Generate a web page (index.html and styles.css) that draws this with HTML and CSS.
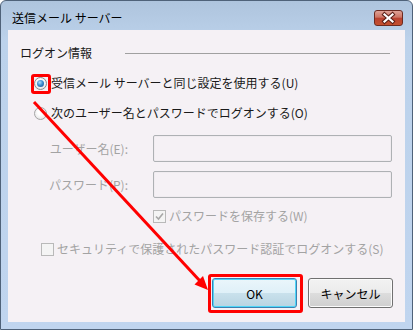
FILE: index.html
```html
<!DOCTYPE html>
<html lang="ja">
<head>
    <meta charset="UTF-8">
    <title>送信メール サーバー</title>
    <link rel="stylesheet" href="styles.css">
</head>
<body>
    <div class="window">
        <div class="titlebar">
            <span class="title">送信メール サーバー</span>
            <span class="close">
                <svg width="29" height="16" viewBox="0 0 29 16">
                    <path d="M10.5 4.5 L18.5 11.5 M18.5 4.5 L10.5 11.5" stroke="#5a1f16" stroke-width="4.2" stroke-linecap="square"/>
                    <path d="M10.5 4.5 L18.5 11.5 M18.5 4.5 L10.5 11.5" stroke="#ffffff" stroke-width="2.2" stroke-linecap="square"/>
                </svg>
            </span>
        </div>

        <div class="content">
            <div class="group-head">
                <span>ログオン情報</span>
                <span class="rule"></span>
            </div>

            <div class="option first">
                <span class="radio checked"><span class="dot"></span></span>
                <span>受信メール サーバーと同じ設定を使用する(U)</span>
            </div>
            <div class="option">
                <span class="radio"></span>
                <span>次のユーザー名とパスワードでログオンする(O)</span>
            </div>

            <div class="field first">
                <span class="field-label">ユーザー名(E):</span>
                <span class="input"></span>
            </div>
            <div class="field">
                <span class="field-label">パスワード(P):</span>
                <span class="input"></span>
            </div>

            <div class="check save">
                <span class="box">
                    <svg width="11" height="11" viewBox="0 0 11 11">
                        <path d="M2 5.5 L4.5 8 L9 2.5" fill="none" stroke="#a7a7a7" stroke-width="1.6"/>
                    </svg>
                </span>
                <span>パスワードを保存する(W)</span>
            </div>
            <div class="check secure">
                <span class="box"></span>
                <span>セキュリティで保護されたパスワード認証でログオンする(S)</span>
            </div>

            <div class="buttons">
                <span class="btn default">OK</span>
                <span class="btn">キャンセル</span>
            </div>
        </div>

        <!-- annotations drawn over the dialog -->
        <div class="mark mark-radio"></div>
        <div class="mark mark-ok"></div>
        <svg class="arrow" width="413" height="330" viewBox="0 0 413 330">
            <line x1="34" y1="102" x2="200" y2="281" stroke="#ff0000" stroke-width="3"/>
            <polygon points="208,290 194.5,284.5 203,276" fill="#ff0000"/>
        </svg>
    </div>
</body>
</html>
```

FILE: styles.css
```css
body {
    margin: 0;
    font-family: "Noto Sans CJK JP", "Noto Sans", sans-serif;
    font-size: 12px;
    color: #1a1a1a;
}
.window {
    position: relative;
    width: 413px;
    height: 330px;
    box-sizing: border-box;
    border: 1px solid #4f6279;
    border-radius: 6px 6px 0 0;
    background: linear-gradient(#aec4dd, #bcd2eb 40px, #c0d5ef);
    display: flex;
    flex-direction: column;
}
.titlebar {
    height: 29px;
    display: flex;
    align-items: flex-start;
    padding: 0 9px 0 11px;
}
.title {
    margin-top: 8px;
    line-height: 17px;
    color: #000;
}
.close {
    margin-left: auto;
    margin-top: 9px;
    width: 29px;
    height: 16px;
    box-sizing: border-box;
    border: 1px solid #6c2a20;
    border-radius: 3px;
    background: linear-gradient(#dfa397, #cc7363 45%, #b94130 50%, #c4502f 100%);
    display: flex;
    align-items: center;
    justify-content: center;
}
.close svg {
    margin: -1px;
}
.content {
    flex: 1;
    margin: 0 7px 7px 7px;
    background-color: #f5f1f5;
    padding: 15px 12px 0 12px;
}
.group-head {
    height: 16px;
    line-height: 16px;
    display: flex;
    align-items: center;
}
.rule {
    flex: 1;
    margin: 0 3px 0 33px;
    border-top: 1px solid #a0a0a0;
}
.option {
    height: 20px;
    line-height: 20px;
    display: flex;
    align-items: center;
    margin: 10px 0 0 14px;
}
.option.first {
    margin-top: 12px;
}
.radio {
    width: 13px;
    height: 13px;
    box-sizing: border-box;
    border-radius: 50%;
    border: 1px solid #a4a4a4;
    background: radial-gradient(circle at 50% 40%, #ffffff 30%, #dcdcdc 100%);
    margin-right: 4px;
    display: flex;
    align-items: center;
    justify-content: center;
}
.radio.checked {
    border-color: #8a8a8a;
}
.dot {
    width: 7px;
    height: 7px;
    border-radius: 50%;
    background: radial-gradient(circle at 40% 35%, #aee0fb 0%, #3d8fd0 45%, #174a84 100%);
}
.field {
    height: 27px;
    display: flex;
    align-items: center;
    margin: 9px 0 0 16px;
    color: #a3a3a3;
}
.field.first {
    margin-top: 12px;
}
.field-label {
    width: 92px;
    text-align: right;
    margin-right: 25px;
}
.input {
    width: 239px;
    height: 27px;
    box-sizing: border-box;
    border: 1px solid #aeb1b4;
    border-radius: 2px;
    box-shadow: inset 0 0 0 1px #f0ecf0;
}
.check {
    height: 14px;
    line-height: 14px;
    display: flex;
    align-items: center;
    color: #a3a3a3;
}
.check.save {
    margin: 11px 0 0 133px;
}
.check.secure {
    margin: 19px 0 0 21px;
}
.box {
    width: 13px;
    height: 13px;
    box-sizing: border-box;
    border: 1px solid #b9b9b9;
    background: #f4f4f4;
    margin-right: 3px;
    display: flex;
    align-items: center;
    justify-content: center;
}
.buttons {
    display: flex;
    justify-content: flex-end;
    gap: 11px;
    margin-top: 22px;
}
.btn {
    width: 85px;
    height: 30px;
    box-sizing: border-box;
    border: 1px solid #707070;
    border-radius: 3px;
    background: linear-gradient(#f2f2f2 0%, #ebebeb 50%, #dddddd 50%, #cfcfcf 100%);
    box-shadow: inset 0 0 0 1px #fbfbfb;
    display: flex;
    align-items: center;
    justify-content: center;
    color: #000;
}
.btn.default {
    border-color: #3c7fb1;
    box-shadow: inset 0 0 0 1px #4ed6f8;
    background: linear-gradient(#eaf6fb 0%, #dff0f8 50%, #c9e1ec 50%, #b8d4e2 100%);
}
.mark {
    position: absolute;
    box-sizing: border-box;
    border: 3px solid #ff0000;
    border-radius: 3px;
}
.mark-radio {
    left: 30px;
    top: 73px;
    width: 20px;
    height: 20px;
}
.mark-ok {
    left: 207px;
    top: 273px;
    width: 95px;
    height: 39px;
}
.arrow {
    position: absolute;
    left: -1px;
    top: -1px;
    pointer-events: none;
}
```
